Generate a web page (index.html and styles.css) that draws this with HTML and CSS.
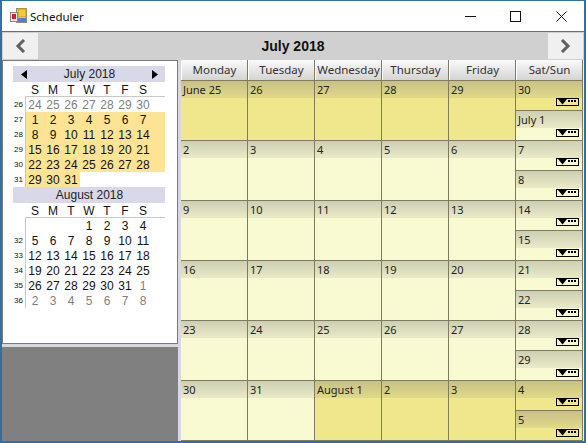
FILE: index.html
```html
<!DOCTYPE html>
<html lang="en">
<head>
    <meta charset="UTF-8">
    <title>Scheduler</title>
    <link rel="stylesheet" href="styles.css">
</head>
<body>
    <svg class="defs" width="0" height="0">
        <symbol id="more" viewBox="0 0 23 8">
            <rect x="0.5" y="0.5" width="22" height="7" fill="none" stroke="#000"/>
            <polygon points="2,1 11,1 6.5,6.5" fill="#000"/>
            <rect x="12" y="2" width="2" height="2" fill="#000"/>
            <rect x="15" y="2" width="2" height="2" fill="#000"/>
            <rect x="18" y="2" width="2" height="2" fill="#000"/>
        </symbol>
    </svg>

    <div class="window">
        <div class="titlebar">
            <svg class="app-icon" width="17" height="16" viewBox="0 0 17 16">
                <rect x="6.5" y="0.5" width="10" height="14" fill="#e8e8e8" stroke="#8a8a8a"/>
                <rect x="8" y="1" width="8" height="8" fill="#f5c93a" stroke="#c79a1e"/>
                <rect x="8" y="10" width="8" height="4" fill="#4f7fd0"/>
                <rect x="0.5" y="4.5" width="7" height="9" fill="#e8e8e8" stroke="#8a8a8a"/>
                <rect x="2" y="6" width="4" height="5" fill="#c8242c"/>
            </svg>
            <span class="title">Scheduler</span>
            <div class="win-btns">
                <div class="win-btn"><svg width="11" height="11" viewBox="0 0 11 11"><path d="M0 5.5H11" stroke="#111"/></svg></div>
                <div class="win-btn"><svg width="11" height="11" viewBox="0 0 11 11"><rect x="0.5" y="0.5" width="10" height="10" fill="none" stroke="#111"/></svg></div>
                <div class="win-btn"><svg width="11" height="11" viewBox="0 0 11 11"><path d="M0.5 0.5L10.5 10.5M10.5 0.5L0.5 10.5" stroke="#111"/></svg></div>
            </div>
        </div>

        <div class="navbar">
            <div class="nav-btn"><svg width="11" height="14" viewBox="0 0 11 14"><path d="M9 1L3 7L9 13" fill="none" stroke="#606060" stroke-width="3"/></svg></div>
            <div class="nav-title">July 2018</div>
            <div class="nav-btn"><svg width="11" height="14" viewBox="0 0 11 14"><path d="M2 1L8 7L2 13" fill="none" stroke="#606060" stroke-width="3"/></svg></div>
        </div>

        <div class="main">
            <div class="sidebar">
                <div class="picker">
                    <div class="mini-head">
                        <svg width="6" height="9" viewBox="0 0 6 9"><polygon points="6,0 6,9 0,4.5" fill="#000"/></svg>
                        <span>July 2018</span>
                        <svg width="6" height="9" viewBox="0 0 6 9"><polygon points="0,0 0,9 6,4.5" fill="#000"/></svg>
                    </div>
                    <div class="dow"><span>S</span><span>M</span><span>T</span><span>W</span><span>T</span><span>F</span><span>S</span></div>
                    <div class="mini-body">
                        <div class="weeks"><span>26</span><span>27</span><span>28</span><span>29</span><span>30</span><span>31</span></div>
                        <div class="days">
                            <span class="off">24</span><span class="off">25</span><span class="off">26</span><span class="off">27</span><span class="off">28</span><span class="off">29</span><span class="off">30</span>
                            <span class="cur">1</span><span class="cur">2</span><span class="cur">3</span><span class="cur">4</span><span class="cur">5</span><span class="cur">6</span><span class="cur">7</span>
                            <span class="cur">8</span><span class="cur">9</span><span class="cur">10</span><span class="cur">11</span><span class="cur">12</span><span class="cur">13</span><span class="cur">14</span>
                            <span class="cur">15</span><span class="cur">16</span><span class="cur">17</span><span class="cur">18</span><span class="cur">19</span><span class="cur">20</span><span class="cur">21</span>
                            <span class="cur">22</span><span class="cur">23</span><span class="cur">24</span><span class="cur">25</span><span class="cur">26</span><span class="cur">27</span><span class="cur">28</span>
                            <span class="cur">29</span><span class="cur">30</span><span class="cur">31</span>
                        </div>
                    </div>

                    <div class="mini-head center"><span>August 2018</span></div>
                    <div class="dow"><span>S</span><span>M</span><span>T</span><span>W</span><span>T</span><span>F</span><span>S</span></div>
                    <div class="mini-body">
                        <div class="weeks"><span></span><span>32</span><span>33</span><span>34</span><span>35</span><span>36</span></div>
                        <div class="days">
                            <span></span><span></span><span></span><span>1</span><span>2</span><span>3</span><span>4</span>
                            <span>5</span><span>6</span><span>7</span><span>8</span><span>9</span><span>10</span><span>11</span>
                            <span>12</span><span>13</span><span>14</span><span>15</span><span>16</span><span>17</span><span>18</span>
                            <span>19</span><span>20</span><span>21</span><span>22</span><span>23</span><span>24</span><span>25</span>
                            <span>26</span><span>27</span><span>28</span><span>29</span><span>30</span><span>31</span><span class="off">1</span>
                            <span class="off">2</span><span class="off">3</span><span class="off">4</span><span class="off">5</span><span class="off">6</span><span class="off">7</span><span class="off">8</span>
                        </div>
                    </div>
                </div>
                <div class="sidebar-fill"></div>
            </div>

            <div class="splitter"></div>

            <div class="schedule">
                <div class="col-heads">
                    <div>Monday</div><div>Tuesday</div><div>Wednesday</div><div>Thursday</div><div>Friday</div><div>Sat/Sun</div>
                </div>
                <div class="grid">
                    <div class="cell in"><div class="date">June 25</div></div>
                    <div class="cell in"><div class="date">26</div></div>
                    <div class="cell in"><div class="date">27</div></div>
                    <div class="cell in"><div class="date">28</div></div>
                    <div class="cell in"><div class="date">29</div></div>
                    <div class="cell weekend">
                        <div class="half in"><div class="date">30</div><svg class="more"><use href="#more"/></svg></div>
                        <div class="half"><div class="date">July 1</div><svg class="more"><use href="#more"/></svg></div>
                    </div>

                    <div class="cell"><div class="date">2</div></div>
                    <div class="cell"><div class="date">3</div></div>
                    <div class="cell"><div class="date">4</div></div>
                    <div class="cell"><div class="date">5</div></div>
                    <div class="cell"><div class="date">6</div></div>
                    <div class="cell weekend">
                        <div class="half"><div class="date">7</div><svg class="more"><use href="#more"/></svg></div>
                        <div class="half"><div class="date">8</div><svg class="more"><use href="#more"/></svg></div>
                    </div>

                    <div class="cell"><div class="date">9</div></div>
                    <div class="cell"><div class="date">10</div></div>
                    <div class="cell"><div class="date">11</div></div>
                    <div class="cell"><div class="date">12</div></div>
                    <div class="cell"><div class="date">13</div></div>
                    <div class="cell weekend">
                        <div class="half"><div class="date">14</div><svg class="more"><use href="#more"/></svg></div>
                        <div class="half"><div class="date">15</div><svg class="more"><use href="#more"/></svg></div>
                    </div>

                    <div class="cell"><div class="date">16</div></div>
                    <div class="cell"><div class="date">17</div></div>
                    <div class="cell"><div class="date">18</div></div>
                    <div class="cell"><div class="date">19</div></div>
                    <div class="cell"><div class="date">20</div></div>
                    <div class="cell weekend">
                        <div class="half"><div class="date">21</div><svg class="more"><use href="#more"/></svg></div>
                        <div class="half"><div class="date">22</div><svg class="more"><use href="#more"/></svg></div>
                    </div>

                    <div class="cell"><div class="date">23</div></div>
                    <div class="cell"><div class="date">24</div></div>
                    <div class="cell"><div class="date">25</div></div>
                    <div class="cell"><div class="date">26</div></div>
                    <div class="cell"><div class="date">27</div></div>
                    <div class="cell weekend">
                        <div class="half"><div class="date">28</div><svg class="more"><use href="#more"/></svg></div>
                        <div class="half"><div class="date">29</div><svg class="more"><use href="#more"/></svg></div>
                    </div>

                    <div class="cell"><div class="date">30</div></div>
                    <div class="cell"><div class="date">31</div></div>
                    <div class="cell in"><div class="date">August 1</div></div>
                    <div class="cell in"><div class="date">2</div></div>
                    <div class="cell in"><div class="date">3</div></div>
                    <div class="cell weekend">
                        <div class="half in"><div class="date">4</div><svg class="more"><use href="#more"/></svg></div>
                        <div class="half in"><div class="date">5</div><svg class="more"><use href="#more"/></svg></div>
                    </div>
                </div>
            </div>
        </div>
    </div>
</body>
</html>
```

FILE: styles.css
```css
* {
    box-sizing: border-box;
}
body {
    margin: 0;
    width: 586px;
    height: 443px;
    overflow: hidden;
    font-family: "Liberation Sans", Arial, sans-serif;
}
.defs {
    display: block;
    height: 0;
}
.window {
    width: 586px;
    height: 443px;
    display: flex;
    flex-direction: column;
    background-color: #f0f0f0;
    border: 2px solid #2f70a8;
    border-top-width: 1px;
}

/* title bar */
.titlebar {
    height: 31px;
    flex: none;
    display: flex;
    align-items: center;
    background-color: #fff;
    border-bottom: 1px solid #6e6e6e;
    padding-left: 8px;
}
.title {
    font-family: "Noto Sans", sans-serif;
    font-size: 11.5px;
    color: #111;
    margin-left: 3px;
}
.win-btns {
    display: flex;
    margin-left: auto;
}
.win-btn {
    width: 45.5px;
    height: 30px;
    display: flex;
    align-items: center;
    justify-content: center;
}

/* month navigation */
.navbar {
    height: 28px;
    flex: none;
    display: flex;
    align-items: stretch;
    justify-content: space-between;
    background-color: #d0d0d0;
    padding: 1px;
}
.nav-btn {
    width: 35px;
    display: flex;
    align-items: center;
    justify-content: center;
    background-color: #f0f0f0;
}
.nav-title {
    font-size: 14px;
    font-weight: bold;
    color: #111;
    line-height: 27px;
}

.main {
    flex: 1;
    display: flex;
    min-height: 0;
}

/* left column */
.sidebar {
    width: 176px;
    flex: none;
    display: flex;
    flex-direction: column;
    background-color: #d8d8e0;
}
.picker {
    height: 284px;
    flex: none;
    background-color: #fff;
    border: 1px solid #7a7a7a;
    padding: 5px 0 0 10px;
    font-size: 12px;
    color: #111;
}
.sidebar-fill {
    flex: 1;
    margin-top: 3px;
    background-color: #808080;
}
.splitter {
    width: 3px;
    flex: none;
    background-color: #d8d8e0;
}
.mini-head {
    width: 152px;
    height: 16px;
    display: flex;
    align-items: center;
    justify-content: space-between;
    padding: 0 7px 0 8px;
    background-color: #d8d8e8;
    color: #222;
}
.mini-head.center {
    justify-content: center;
}
.dow {
    height: 14px;
    margin-left: 13px;
    display: grid;
    grid-template-columns: repeat(6, 18px) 31px;
    line-height: 16px;
}
.dow span {
    text-align: center;
}
.dow span:last-child,
.days span:nth-child(7n) {
    padding-right: 13px;
}
.mini-body {
    display: flex;
}
.weeks {
    width: 12px;
    padding-top: 1px;
    display: flex;
    flex-direction: column;
}
.weeks span {
    height: 15px;
    line-height: 15px;
    font-size: 8px;
    text-align: right;
    padding-right: 2px;
}
.days {
    width: 140px;
    display: grid;
    grid-template-columns: repeat(6, 18px) 31px;
    grid-auto-rows: 15px;
    border-top: 1px solid #c8c8c8;
    border-left: 1px solid #c8c8c8;
}
.days span {
    text-align: center;
    line-height: 16px;
}
.days .off {
    color: #808080;
}
.days .cur {
    background-color: #fde494;
}

/* month grid */
.schedule {
    width: 402px;
    flex: none;
    display: flex;
    flex-direction: column;
    font-family: "Noto Sans", sans-serif;
    font-size: 11px;
    color: #222;
}
.col-heads {
    height: 21px;
    flex: none;
    display: grid;
    grid-template-columns: repeat(6, 67px);
    border-bottom: 1px solid #7f7b5d;
}
.col-heads div {
    text-align: center;
    line-height: 20px;
    font-size: 11.5px;
    color: #333;
    background: linear-gradient(#fafafa, #d4d4d4);
    border-left: 1px solid #fff;
    border-right: 1px solid #7f7b5d;
}
.grid {
    flex: 1;
    display: grid;
    grid-template-columns: repeat(6, 67px);
    grid-template-rows: repeat(6, 60px);
}
.cell {
    border-right: 1px solid #7f7b5d;
    border-bottom: 1px solid #7f7b5d;
    background-color: #fafad2;
}
.cell.in,
.half.in {
    background-color: #f0e68c;
}
.date {
    height: 17px;
    line-height: 17px;
    padding-left: 2px;
    background: linear-gradient(rgba(120, 120, 120, 0.34), rgba(120, 120, 120, 0.12));
}
.weekend {
    display: flex;
    flex-direction: column;
}
.half {
    height: 30px;
    display: flex;
    flex-direction: column;
    background-color: #fafad2;
}
.half:first-child {
    border-bottom: 1px solid #7f7b5d;
}
.half:last-child {
    height: 29px;
}
.half:last-child .more {
    margin-top: 1px;
}
.more {
    display: block;
    width: 23px;
    height: 8px;
    flex: none;
    align-self: flex-end;
    margin-right: 3px;
}
```
